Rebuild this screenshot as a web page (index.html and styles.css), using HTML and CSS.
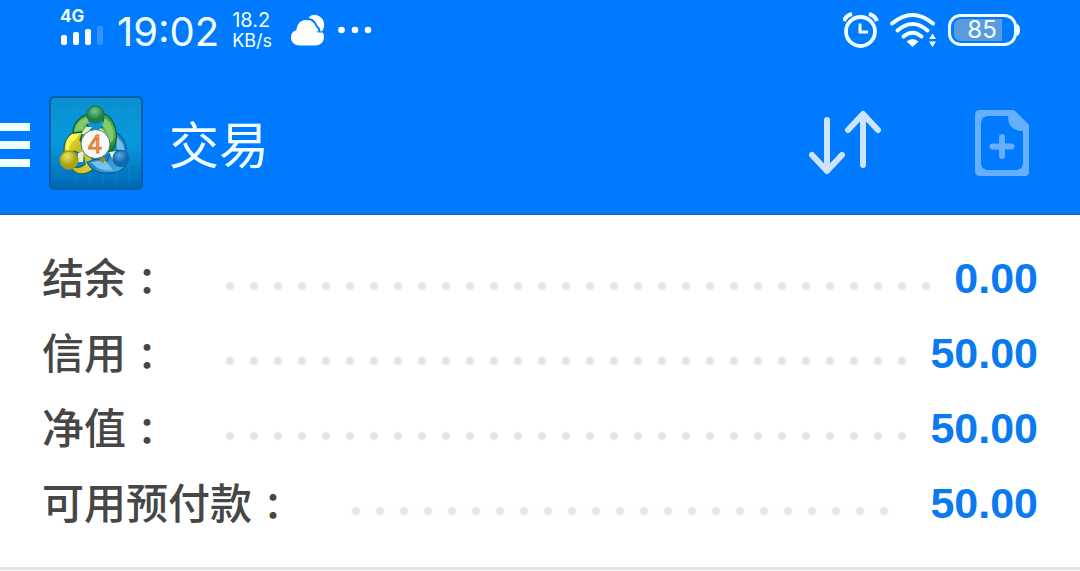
FILE: index.html
```html
<!DOCTYPE html>
<html lang="zh-CN">
<head>
<meta charset="utf-8">
<meta name="viewport" content="width=device-width, initial-scale=1">
<title>交易</title>
<link rel="stylesheet" href="styles.css">
</head>
<body>
<header class="top">
  <div class="status">
    <div class="status-group">
      <div class="signal">
        <span class="network">4G</span>
        <svg width="44" height="21" viewBox="0 0 44 21" fill="#fff" aria-hidden="true">
          <rect x="1" y="10" width="6" height="10" rx="2"/>
          <rect x="13" y="7" width="6" height="13" rx="2"/>
          <rect x="25" y="4" width="6" height="16" rx="2"/>
          <rect x="37" y="1" width="6" height="19" rx="2" opacity=".2"/>
        </svg>
      </div>
      <time class="clock">19:02</time>
      <div class="speed"><span class="speed-number">18.2</span><span class="speed-unit">KB/s</span></div>
      <svg class="weather" width="34" height="32" viewBox="0 0 34 32" fill="#fff" aria-hidden="true">
        <path d="M18 3.200C20.500 .8 23 .4 26 1.200C32 3 34.500 9 32.500 14.500C32 16.200 31.200 17.200 30.300 17.500L26 17.500L18 8Z"/>
        <path d="M9 31.500C3.500 31.500 0 28 0 23.500C0 19.500 2.500 16.800 5.500 16C6 10 9.500 6 15 6C20 6 23.500 9 25 16.500C26 19 29 18.500 31.500 18.500C33 20 33 21.500 33 23C33 28 29 31.500 24 31.500Z"/>
        <path d="M14 4.300Q23 4.500 25.800 12.500Q28.500 14 28.500 18" fill="none" stroke="#007aff" stroke-width="2"/>
      </svg>
      <svg width="34" height="8" viewBox="0 0 34 8" fill="#fff" aria-hidden="true">
        <circle cx="3.500" cy="4" r="3.300"/><circle cx="17" cy="4" r="3.300"/><circle cx="30" cy="4" r="3.300"/>
      </svg>
    </div>
    <div class="status-group status-right">
      <svg width="36" height="36" viewBox="0 0 36 36" fill="none" stroke="#f0ffff" aria-hidden="true">
        <circle cx="17.500" cy="19.500" r="14.500" stroke-width="3.800"/>
        <path d="M17 11.500V20H25" stroke-width="3"/>
        <path d="M1 9Q3 3.500 9 2M26 2Q32 3.500 34 9" stroke-width="4"/>
      </svg>
      <svg width="47" height="36" viewBox="0 0 47 36" fill="none" stroke="#f0ffff" stroke-linecap="round" aria-hidden="true">
        <path d="M2 11.500Q22.500-5.500 43 11.500" stroke-width="4"/>
        <path d="M7.500 18.500Q22.500 5.500 37.500 18.500M13.500 24.500Q22.500 17 31.500 24.500" stroke-width="4"/>
        <path d="M16.500 29.500Q22.500 24.500 28.500 29.500L22.500 35Z" fill="#f0ffff" stroke="none"/>
        <path d="M39 27L42.500 21.500L46 27ZM39 29.500L42.500 35L46 29.500Z" fill="#f0ffff" stroke="none"/>
      </svg>
      <div class="battery">
        <svg width="74" height="32" viewBox="0 0 74 32" aria-hidden="true">
          <path d="M14 5H54V27H14Q6 27 6 20V12Q6 5 14 5Z" fill="#5c9ae0"/>
          <rect x="1.500" y="1.500" width="66" height="29" rx="11" fill="none" stroke="#f0ffff" stroke-width="3"/>
          <path d="M69 10Q72 11 72 16Q72 21 69 22Z" fill="#f0ffff"/>
        </svg>
        <span class="battery-level">85</span>
      </div>
    </div>
  </div>
  <div class="toolbar">
    <button class="icon-button" type="button" aria-label="菜单">
      <svg width="30" height="50" viewBox="0 0 30 50" fill="#f0ffff"><path d="M0 5H30V13H0ZM0 23H30V31H0ZM0 41H30V49H0Z"/></svg>
    </button>
    <svg class="logo" width="94" height="94" viewBox="0 0 94 94" aria-hidden="true">
      <defs>
        <linearGradient id="bg" x2="0" y2="1"><stop stop-color="#0b8fd0"/><stop offset=".5" stop-color="#0799dd"/><stop offset="1" stop-color="#0067b5"/></linearGradient>
        <linearGradient id="green" x2="0" y2="1"><stop stop-color="#2f9b45"/><stop offset=".5" stop-color="#66bd55"/><stop offset="1" stop-color="#137332"/></linearGradient>
        <linearGradient id="yellow" x2="1" y2="1"><stop stop-color="#f3e934"/><stop offset=".5" stop-color="#c7b91d"/><stop offset="1" stop-color="#e5d83b"/></linearGradient>
        <linearGradient id="blue" x2="1" y2="1"><stop stop-color="#79c8ef"/><stop offset=".5" stop-color="#2587c5"/><stop offset="1" stop-color="#54b2e8"/></linearGradient>
        <radialGradient id="green-ball" cx=".45" cy=".3"><stop stop-color="#74c991"/><stop offset="1" stop-color="#1d8046"/></radialGradient>
        <radialGradient id="yellow-ball" cx=".4" cy=".3"><stop stop-color="#eee65c"/><stop offset="1" stop-color="#aaa015"/></radialGradient>
        <radialGradient id="blue-ball" cx=".4" cy=".3"><stop stop-color="#59a9dc"/><stop offset="1" stop-color="#0b69ae"/></radialGradient>
      </defs>
      <rect x="1" y="1" width="92" height="92" rx="4" fill="url(#bg)" stroke="#075ea8" stroke-width="2"/>
      <path d="M15 2V92M28 2V92M41 2V92M54 2V92M67 2V92M80 2V92M2 15H92M2 28H92M2 41H92M2 54H92M2 67H92M2 80H92" stroke="#35a9e5" stroke-opacity=".15" fill="none"/>
      <g stroke-width="1.300" stroke-linejoin="round">
        <path d="M35 34C24 34 15 41 15 53V61L25 55L34 58L36 68C32 72 26 72 21 70C27 82 39 79 47 71L36 49Z" fill="url(#yellow)" stroke="#176b69"/>
        <path d="M17 47C19 39 25 36 32 36L26 44C22 46 20 50 20 55Q16 56 17 47Z" fill="#fcf553" stroke="none"/>
        <path d="M57 34C69 35 78 43 77 56L71 55L62 55L58 65L48 63L38 66C42 74 50 78 59 77C65 77 73 76 77 69" fill="url(#blue)" stroke="#075e9f"/>
        <path d="M62 38C70 41 75 47 75 55L68 53C68 46 66 43 62 38ZM42 66C48 73 55 76 64 74L56 64Z" fill="#74c1eb" stroke="none"/>
        <path d="M39 18C29 21 24 29 24 37L34 36L31 44L38 52H56L61 56C68 51 68 40 66 31C64 24 59 19 53 17L55 27L52 34H41L37 27Z" fill="url(#green)" stroke="#086034"/>
        <path d="M38 21C31 23 27 28 26 35L34 33Q35 28 40 27ZM56 22C63 27 65 35 64 44L60 48C60 38 57 32 53 30Z" fill="#86c96c" stroke="none"/>
        <path d="M37 31H43L38 38H32ZM52 32L58 39L54 41L47 36ZM29 57L35 55L34 66H29ZM60 56L67 55L64 64Z" fill="#e9f0c7" stroke="none"/>
        <path d="M50 64L54 60L57 63L54 67Z" fill="#9b841d" stroke="none"/>
        <ellipse cx="46.500" cy="18.500" rx="8.500" ry="8.500" fill="url(#green-ball)" stroke="#1d7a45"/>
        <circle cx="20" cy="64" r="9" fill="url(#yellow-ball)" stroke="#a59a12"/>
        <circle cx="72" cy="62.500" r="8" fill="url(#blue-ball)" stroke="#1269aa"/>
      </g>
      <circle cx="46.500" cy="48" r="14.500" fill="#f7faf9" stroke="#3d7974" stroke-width="1"/>
      <text class="logo-number" x="46" y="57" text-anchor="middle">4</text>
    </svg>
    <h1 class="title">交易</h1>
    <div class="actions">
      <button class="icon-button" type="button" aria-label="排序">
        <svg width="74" height="66" viewBox="0 0 74 66" fill="none" stroke="#cce4ff" stroke-width="6" stroke-linecap="round" stroke-linejoin="round"><path d="M18 10V61M3 45L18 61L33 45M54 55V5M39 20L54 4L69 20"/></svg>
      </button>
      <button class="icon-button" type="button" aria-label="新订单">
        <svg width="54" height="68" viewBox="0 0 54 68" fill="none" stroke="#66afff" stroke-width="6" stroke-linecap="round" stroke-linejoin="round"><path d="M5 4H38L51 17V63Q51 64 50 64H5Q3 64 3 62V6Q3 4 5 4Z"/><path d="M33 4H39L53 17V22H45Q33 20 33 8Z" fill="#66afff" stroke="none"/><path d="M27 28V47M17.500 37.500H36.500"/><path d="M6 11Q6 7 10 7M6 57Q6 61 10 61M44 61Q48 61 48 57" stroke-width="2"/></svg>
      </button>
    </div>
  </div>
</header>
<main>
  <dl class="account">
    <div class="row"><dt class="label">结余<span class="colon">：</span></dt><dd class="value">0.00</dd></div>
    <div class="row"><dt class="label">信用<span class="colon">：</span></dt><dd class="value">50.00</dd></div>
    <div class="row"><dt class="label">净值<span class="colon">：</span></dt><dd class="value">50.00</dd></div>
    <div class="row"><dt class="label">可用预付款<span class="colon">：</span></dt><dd class="value">50.00</dd></div>
  </dl>
</main>
</body>
</html>
```
FILE: styles.css
```css
* {
  box-sizing: border-box;
}

body {
  margin: 0;
  background: #fff;
  color: #464646;
  font-family: "Liberation Sans", "Noto Sans CJK SC", sans-serif;
}

svg {
  display: block;
  flex: none;
}

.top {
  background: #007aff;
  border-bottom: 2px solid #1668c8;
  color: #f0ffff;
}

.status {
  display: flex;
  align-items: center;
  justify-content: space-between;
  height: 60px;
  padding: 0 58px 0 60px;
  font-family: Inter, sans-serif;
}

.status-group {
  display: flex;
  align-items: center;
  gap: 13px;
}

.signal {
  display: flex;
  flex-direction: column;
  padding-bottom: 6px;
}

.network {
  font-size: 17px;
  font-weight: 700;
  line-height: 17px;
}

.clock {
  padding-top: 4px;
  font-size: 40px;
  line-height: 60px;
}

.speed {
  display: flex;
  flex-direction: column;
  margin-right: 6px;
}

.speed-number {
  font-size: 20px;
  line-height: 21px;
}

.speed-unit {
  font-size: 18px;
  line-height: 19px;
}

.status-right {
  gap: 11px;
}

.battery {
  position: relative;
}

.battery-level {
  position: absolute;
  inset: 0 6px 0 0;
  font-size: 24px;
  line-height: 32px;
  text-align: center;
}

.toolbar {
  display: flex;
  align-items: center;
  padding: 36px 51px 23px 0;
}

.icon-button {
  padding: 0;
  border: 0;
  background: none;
  cursor: pointer;
}

.logo {
  margin-left: 19px;
}

.logo-number {
  fill: #f7a34b;
  stroke: #df7625;
  stroke-width: 1px;
  font-family: "Liberation Sans", sans-serif;
  font-size: 25px;
  font-weight: 400;
}

.title {
  margin: 0 0 0 26px;
  padding-bottom: 2px;
  font-family: "Noto Sans CJK SC", sans-serif;
  font-size: 50px;
  font-weight: 400;
  line-height: 60px;
}

.actions {
  display: flex;
  align-items: center;
  gap: 92px;
  margin-left: auto;
}

.account {
  margin: 0;
  padding: 27px 42px 25px;
  border-bottom: 3px solid #e4e4e4;
}

.row {
  display: grid;
  grid-template-columns: 1fr auto;
  column-gap: 14px;
}

.label {
  display: grid;
  grid-template-columns: auto 42px 1fr;
  font-family: "Noto Sans CJK SC", sans-serif;
  font-size: 42px;
  font-weight: 500;
  line-height: 68px;
}

/* Dotted leader: only whole 24px steps are drawn. */
.label::after {
  content: "";
  align-self: center;
  width: round(down, 100% - 50px, 24px);
  height: 24px;
  margin: 12px 0 0 50px;
  background: radial-gradient(circle, #e4e4e4 3px, #e4e4e400 5px) 0 0 / 24px 24px repeat-x;
}

.colon {
  font-family: "Noto Sans CJK JP", sans-serif;
  font-size: 36px;
  font-weight: 700;
  line-height: 75px;
  text-align: center;
}

.value {
  margin: 0;
  color: #0a7af0;
  font-size: 43px;
  font-weight: 700;
  line-height: 73px;
}
```
